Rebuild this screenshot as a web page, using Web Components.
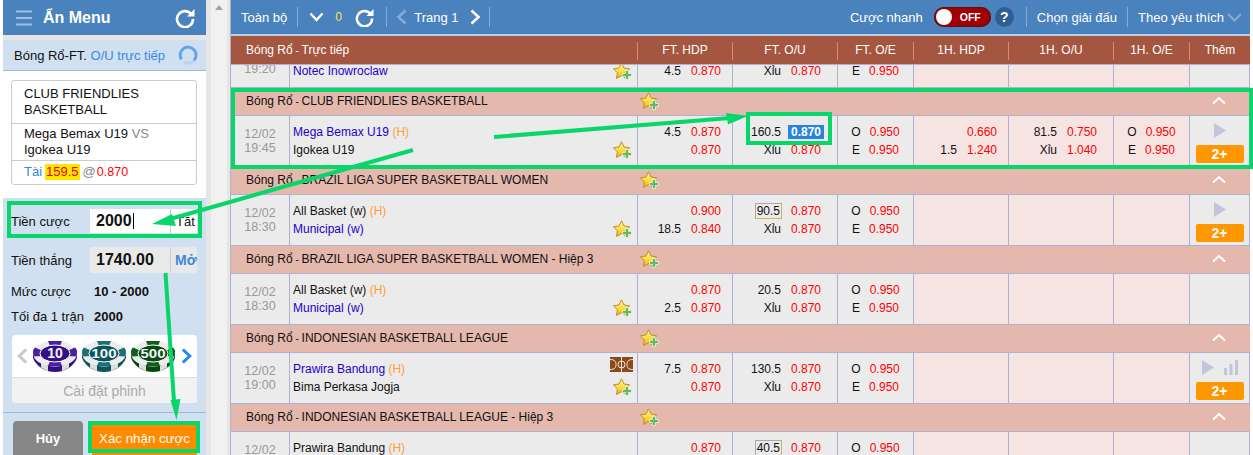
<!DOCTYPE html>
<html lang="vi"><head><meta charset="utf-8"><title>Bet</title>
<style>
html,body{margin:0;padding:0;background:#fff;overflow:hidden}
body{width:1253px;height:455px;position:relative;font:12px "Liberation Sans",Arial,sans-serif;color:#111}
.page{display:flex;height:455px;padding-left:3px;box-sizing:border-box}
</style></head><body>
<div class="page">
<bet-slip></bet-slip>
<side-gutter></side-gutter>
<bet-board>
<bet-match clip time="19:20" away="Notec Inowroclaw" fav="away" ft-hdp="~|4.5 0.870" ft-ou="~|Xỉu 0.870" ft-oe="~|E 0.950"></bet-match>
<bet-league name="CLUB FRIENDLIES BASKETBALL"></bet-league>
<bet-match date="12/02" time="19:45" home="Mega Bemax U19" away="Igokea U19" fav="home" ft-hdp="4.5 0.870|_ 0.870" ft-ou="160.5 *0.870|Xỉu 0.870" ft-oe="O 0.950|E 0.950" h-hdp="_ 0.660|1.5 1.240" h-ou="81.5 0.750|Xỉu 1.040" h-oe="O 0.950|E 0.950" more></bet-match>
<bet-league name="BRAZIL LIGA SUPER BASKETBALL WOMEN"></bet-league>
<bet-match date="12/02" time="18:30" home="All Basket (w)" away="Municipal (w)" fav="away" ft-hdp="_ 0.900|18.5 0.840" ft-ou="[90.5] 0.870|Xỉu 0.870" ft-oe="O 0.950|E 0.950" more></bet-match>
<bet-league name="BRAZIL LIGA SUPER BASKETBALL WOMEN - Hiệp 3"></bet-league>
<bet-match date="12/02" time="18:30" home="All Basket (w)" away="Municipal (w)" fav="away" ft-hdp="_ 0.870|2.5 0.870" ft-ou="20.5 0.870|Xỉu 0.870" ft-oe="O 0.950|E 0.950"></bet-match>
<bet-league name="INDONESIAN BASKETBALL LEAGUE"></bet-league>
<bet-match date="12/02" time="19:00" home="Prawira Bandung" away="Bima Perkasa Jogja" fav="home" court stats ft-hdp="7.5 0.870|_ 0.870" ft-ou="130.5 0.870|Xỉu 0.870" ft-oe="O 0.950|E 0.950" more></bet-match>
<bet-league name="INDONESIAN BASKETBALL LEAGUE - Hiệp 3"></bet-league>
<bet-match date="12/02" time="19:00" home="Prawira Bandung" away="Bima Perkasa Jogja" ft-hdp="_ 0.870|_ 0.870" ft-ou="[40.5] 0.870|Xỉu 0.870" ft-oe="O 0.950|E 0.950"></bet-match>
</bet-board>
</div>
<note-overlay></note-overlay>
<script>
const STAR=`<svg width="20" height="19" viewBox="0 0 20 19" style="display:block"><defs><linearGradient id="sg" x1="0" y1="0" x2="0" y2="1"><stop offset="0" stop-color="#fff6a8"/><stop offset=".55" stop-color="#ffdc3c"/><stop offset="1" stop-color="#eeb011"/></linearGradient></defs><path d="M8.500 .8 11 6l5.600.8-4 4 .9 5.600-5-2.700-5 2.700.9-5.600-4-4L6 6z" fill="url(#sg)" stroke="#b98f2a" stroke-width="1" stroke-linejoin="round"/><path d="M12.500 8.500h3v3h3v3h-3v3h-3v-3h-3v-3h3z" fill="#67b85f" stroke="#e8f5e0" stroke-width=".8"/></svg>`;
const FONT=`font-family:"Liberation Sans",Arial,sans-serif;`;
class Base extends HTMLElement{
  constructor(){super();this.attachShadow({mode:'open'});}
  connectedCallback(){this.shadowRoot.innerHTML=this.render();}
}
customElements.define('side-gutter',class extends Base{render(){return `<style>
:host{display:block;flex:none;width:24px;height:455px;box-sizing:border-box;background:#f1f1f1;border-left:5px solid #e6e6e6;border-right:3px solid #e6e6e6}
i{display:block;width:0;height:0;margin:5px auto 0;border:4px solid transparent;border-top:0;border-bottom:5px solid #a3a3a3}
</style><i></i>`;}});

customElements.define('bet-chip',class extends Base{render(){
 const c=this.getAttribute('color'),d=this.getAttribute('dark'),v=this.getAttribute('value');
 const wide=v.length>2;
 return `<style>:host{display:block;width:44px;height:32px}svg{display:block}text{${FONT}}</style>
 <svg width="44" height="32" viewBox="0 0 44 32"><path d="M0 13v5c3 8 12 14 22 14s19-6 22-14v-5z" fill="${d}"/>
 <path d="M8 22l7 4v5.500l-7-4zM29 26l7-4v5.500l-7 4z" fill="#ddd"/>
 <ellipse cx="22" cy="13.500" rx="22" ry="13" fill="#ececec"/>
 <path d="M15 .9h14l-2 5h-10zM0 11.500C0 10 1 8.500 2 7.500L10 11 9 16 .5 16.500C.2 15 0 13 0 11.500zM44 11.500C44 10 43 8.500 42 7.500L34 11 35 16l8.500.5c.3-1.500.5-3.500.5-5zM15 26.100h14l-2-5h-10z" fill="${c}"/>
 <ellipse cx="22" cy="13.500" rx="15" ry="8.500" fill="${d}" stroke="#fff" stroke-width="1"/>
 <text x="22" y="18" text-anchor="middle" font-size="${wide?12:14}" font-weight="bold" fill="#f2f6f4" ${wide?'textLength="25" lengthAdjust="spacingAndGlyphs"':''}>${v}</text></svg>`;}});

customElements.define('bet-slip',class extends Base{render(){return `<style>
:host{display:flex;flex-direction:column;flex:none;width:203px;height:455px;background:#fff;font:13px "Liberation Sans",Arial,sans-serif;color:#111;overflow:hidden}
.top{height:35px;flex:none;background:#4a82bd;display:flex;align-items:center;color:#fff;font-weight:bold;font-size:16px;padding:0 11px 0 13px;box-sizing:border-box}
.top span{margin-left:11px;flex:1}
.gap{height:5px;background:#e6e6e6;flex:none}
.band{height:31px;flex:none;box-sizing:border-box;background:#d0e0f0;border-bottom:1px solid #9db8d8;display:flex;align-items:center;padding:0 8px 0 11px;white-space:pre}
.band b{font-weight:normal;color:#3a87e4}.band svg{margin-left:auto}
.card{margin:9px 8px 13px;border:1px solid #ccc;border-radius:3px;width:186px;box-sizing:border-box;height:105px;flex:none;line-height:16px}
.card div{padding:0 12px;border-bottom:1px solid #ccc;box-sizing:border-box}
.card div:last-child{border:0}
.c1{height:43px;padding-top:5px!important}.c2{height:37px;padding-top:2px!important}.c3{height:22px;display:flex;align-items:center;font-size:13px;white-space:pre}
.vs{color:#888}.t{color:#3a87e4}.y{background:#ffe600;color:#e60000;padding:0 1px;margin:0 0 0 3px}.at{color:#888;margin:0 1px 0 3px}.r{color:#f00;font-size:12.500px}
.panel{flex:1;background:#d0e0f0;padding-top:11px;display:flex;flex-direction:column}
.row{display:flex;align-items:center;padding-left:8px}
.row label{width:79px;flex:none}
.field{width:107px;display:flex;align-items:center;font-weight:bold;font-size:16px;padding-left:6px;box-sizing:border-box}
.field em{margin-left:auto;width:27px;box-sizing:border-box;border-left:1px solid #ccc;height:100%;display:flex;align-items:center;padding-left:5px;font-style:normal;font-size:13px;overflow:hidden}
.s{height:24px;background:#fff}
.s em{font-weight:normal;color:#111}
.w{height:26px;background:#e9e9e9;border-radius:3px}.w em{color:#3a87e4;font-weight:bold;font-size:14px;padding-left:4px}
.caret{display:inline-block;width:1px;height:16px;background:#000;margin-left:1px}
.info{height:25px}.info b{padding-left:4px;font-size:13px}
.chips{margin:6px 0 0 9px;width:185px;height:68px;flex:none;background:#fff;border-radius:4px;overflow:hidden;display:flex;flex-direction:column}
.rail{height:42px;flex:none;display:flex;align-items:center;padding:0 4px;gap:5px;box-sizing:border-box}
.rail svg{flex:none}
.set{flex:1;background:#f2f2f2;border-top:1px solid #ddd;color:#aaa;font-size:14px;display:flex;align-items:center;justify-content:center}
.foot{margin-top:9px;border-top:1px solid #9db8d8;padding:8px 0 0 10px;display:flex;gap:9px;flex:1}
.btn{height:40px;border-radius:4px;color:#fff;display:flex;align-items:flex-start;justify-content:center;padding-top:10px;box-sizing:border-box;font-weight:bold;font-size:13px}
.h{width:70px;background:#878787}.o{width:105px;background:#ff8a00;font-weight:normal;font-size:13.300px;border-radius:0}
</style>
<div class="top"><svg width="16" height="16" viewBox="0 0 16 16"><path d="M0 1.500h16M0 8h16M0 14.500h16" stroke="#9fc0e2" stroke-width="2"/></svg><span>Ẩn Menu</span>
<svg width="20" height="20" viewBox="0 0 20 20" fill="none"><path d="M16.500 6.500A8 8 0 1 0 18 11" stroke="#fff" stroke-width="2.600"/><path d="M19.500 1v7.500H12z" fill="#fff"/></svg></div>
<div class="gap"></div>
<div class="band">Bóng Rổ-FT. <b>O/U trực tiếp</b><svg width="20" height="20" viewBox="0 0 20 20" fill="none"><path d="M3.400 14.500A8 8 0 1 1 16 15.500" stroke="#5fa5ea" stroke-width="3"/><path d="M16 15.500A8 8 0 0 1 6 17" stroke="#b7d4f0" stroke-width="3"/></svg></div>
<div class="card"><div class="c1">CLUB FRIENDLIES<br>BASKETBALL</div><div class="c2">Mega Bemax U19 <span class="vs">VS</span><br>Igokea U19</div><div class="c3"><span class="t">Tài</span><span class="y">159.5</span><span class="at">@</span><span class="r">0.870</span></div></div>
<div class="panel">
<div class="row"><label>Tiền cược</label><div class="field s">2000<i class="caret"></i><em>Tắt</em></div></div>
<div class="row" style="margin-top:14px"><label>Tiền thắng</label><div class="field w">1740.00<em>Mở</em></div></div>
<div class="row info" style="margin-top:6px"><label>Mức cược</label><b>10 - 2000</b></div>
<div class="row info"><label>Tối đa 1 trận</label><b>2000</b></div>
<div class="chips"><div class="rail">
<svg width="12" height="18" viewBox="0 0 13 18" fill="none"><path d="M11 2 3.500 9 11 16" stroke="#c8c8c8" stroke-width="3.200"/></svg>
<bet-chip value="10" color="#4b1fa0" dark="#351082"></bet-chip><bet-chip value="100" color="#1b6f78" dark="#0e545c"></bet-chip><bet-chip value="500" color="#0e5f1a" dark="#0a4812"></bet-chip>
<svg width="12" height="18" viewBox="0 0 13 18" fill="none" style="margin-left:1px"><path d="M2 2 9.500 9 2 16" stroke="#1e88f0" stroke-width="3.200"/></svg>
</div><div class="set">Cài đặt phỉnh</div></div>
<div class="foot"><div class="btn h">Hủy</div><div class="btn o">Xác nhận cược</div></div>
</div>`;}});

customElements.define('bet-toolbar',class extends Base{render(){return `<style>
:host{display:flex;align-items:center;height:36px;box-sizing:border-box;background:#4a82bd;border-bottom:2px solid;border-image:linear-gradient(#3a6ca4 50%,#b8cde6 50%) 1;color:#fff;font:13px "Liberation Sans",Arial,sans-serif;padding-left:10px;white-space:nowrap}
.sep{width:1px;height:20px;background:#86abd4;flex:none}
svg{display:block;flex:none}
.ri{margin-left:auto;display:flex;align-items:center;padding-right:8px}
.sw{width:57px;height:20px;border-radius:10px;background:#a00000;box-shadow:inset 0 0 0 1px #5a1010;margin-left:11px;display:flex;align-items:center;padding-left:2px;box-sizing:border-box;font-weight:bold;font-size:10.500px}
.sw i{width:16px;height:16px;border-radius:50%;background:#fff;margin-right:8px}
.q{width:19px;height:20px;border-radius:50%;background:#2f5f92;margin:0 12px 0 4px;display:flex;align-items:center;justify-content:center;font-weight:bold;font-size:14px}
</style>
<span>Toàn bộ</span><i class="sep" style="margin:0 11px 0 10px"></i>
<svg width="15" height="10" viewBox="0 0 15 10" fill="none" style="margin-right:11px"><path d="M1.500 1.500 7.500 8l6-6.500" stroke="#fff" stroke-width="2.400"/></svg>
<span style="color:#f5e642;width:20px;font-size:12px;">0</span>
<svg width="19" height="19" viewBox="0 0 20 20" fill="none" style="margin-right:12px"><path d="M16.500 6.500A8 8 0 1 0 18 11" stroke="#fff" stroke-width="2.600"/><path d="M19.500 1v7.500H12z" fill="#fff"/></svg>
<i class="sep"></i>
<svg width="11" height="16" viewBox="0 0 11 16" fill="none" style="margin:0 7px 0 9px"><path d="M9.500 1.500 2.500 8l7 6.500" stroke="#86abd4" stroke-width="2.600"/></svg>
<span style="width:56px">Trang 1</span>
<svg width="11" height="16" viewBox="0 0 11 16" fill="none" style="margin-right:8px"><path d="M1.500 1.500 8.500 8l-7 6.500" stroke="#fff" stroke-width="2.600"/></svg>
<i class="sep"></i>
<div class="ri"><span>Cược nhanh</span><div class="sw"><i></i>OFF</div><div class="q">?</div><i class="sep"></i><span style="margin:0 10px">Chọn giải đấu</span><i class="sep"></i><span style="margin:0 3px 0 10px">Theo yêu thích</span>
<svg width="15" height="9" viewBox="0 0 15 9" fill="none"><path d="M1 1 7.500 7.500 14 1" stroke="#86abd4" stroke-width="2"/></svg></div>`;}});

const COLS='59px 348px 95px 105px 76px 95px 105px 76px 60px';
customElements.define('bet-board',class extends Base{render(){
 const t=['FT. HDP','FT. O/U','FT. O/E','1H. HDP','1H. O/U','1H. O/E','Thêm'];
 return `<style>
:host{display:block;flex:none;width:1020px;height:455px;overflow:hidden;border-left:1px solid #b0b0d0;box-sizing:border-box;--cols:${COLS};--line:#b0b0d2;font:12px "Liberation Sans",Arial,sans-serif}
.head{display:grid;grid-template-columns:407px 95px 105px 76px 95px 105px 76px 60px;height:29px;box-sizing:border-box;background:#a55640;border-bottom:1px solid var(--line);color:#fff;align-items:start;padding-top:6px}
.head div{height:18px;line-height:17px;text-align:center;border-right:1px solid #e08a6a;box-sizing:border-box}
.head div:first-child{text-align:left;padding-left:15px}.head div:last-child{border:0}
.d{font-size:10px}
</style><bet-toolbar></bet-toolbar><div class="head"><div>Bóng Rổ<span class="d"> - </span>Trực tiếp</div>${t.map(x=>`<div>${x}</div>`).join('')}</div><slot></slot>`;}});

customElements.define('bet-league',class extends Base{render(){return `<style>
:host{display:grid;grid-template-columns:407px 1fr 24px;height:28px;box-sizing:border-box;background:#e4b8ac;border-bottom:1px solid var(--line);align-items:center;color:#111;padding-right:14px;width:1019px}
.n{padding-left:15px;white-space:pre;margin-bottom:2px}.d{font-size:10px}
.s{padding-left:2px}
svg{display:block}
.up{margin-bottom:2px}
</style><div class="n">Bóng Rổ<span class="d"> - </span>${this.getAttribute('name')}</div><div class="s">${STAR}</div>
<svg class="up" width="14" height="9" viewBox="0 0 14 9" fill="none"><path d="M1 7.500 7 2l6 5.500" stroke="#fff" stroke-width="2"/></svg>`;}});

function oddsCell(spec){
 return (spec||'').split('|').filter(Boolean).map(l=>{
  if(l==='~')return '<p></p>';
  let [a,b]=l.split(' ');
  if(a==='_')a='';
  const boxed=a.startsWith('[');if(boxed)a=a.slice(1,-1);
  const hi=b.startsWith('*');if(hi)b=b.slice(1);
  return `<p><span class="a${boxed?' box':''}">${a}</span><span class="o${hi?' hi':''}">${b}</span></p>`;
 }).join('');
}
customElements.define('bet-match',class extends Base{render(){
 const A=n=>this.getAttribute(n),H=n=>this.hasAttribute(n);
 const fav=A('fav');
 const home=A('home'),away=A('away');
 const teams=[
  home?`<div class="tm${fav==='home'?' fav':''}">${home} <span class="h">(H)</span></div>`:'<div class="tm"></div>',
  `<div class="tm${fav==='away'?' fav':''}">${away}</div>`].join('');
 const play=`<svg width="12" height="15" viewBox="0 0 12 15"><path d="M0 0l12 7.500L0 15z" fill="#c4c4de"/></svg>`;
 const bars=`<svg width="14" height="15" viewBox="0 0 14 15" fill="#c4c4de" style="margin-left:10px"><rect x="0" y="8" width="3" height="7"/><rect x="5.500" y="4" width="3" height="11"/><rect x="11" y="0" width="3" height="15"/></svg>`;
 const court=`<svg class="court" width="23" height="15" viewBox="0 0 23 15"><rect width="23" height="15" fill="#8a4a1c"/><g fill="none" stroke="#f4e8d8" stroke-width="1"><path d="M11.500 0v15"/><circle cx="11.500" cy="7.500" r="3.500"/><path d="M0 2.500c5 0 6 2 6 5s-1 5-6 5M23 2.500c-5 0-6 2-6 5s1 5 6 5"/></g></svg>`;
 return `<style>
:host{display:block;width:1019px;height:${H('clip')?23:51}px;overflow:hidden;box-sizing:border-box;border-bottom:1px solid var(--line)}
.r{display:grid;grid-template-columns:var(--cols);height:50px;${H('clip')?'margin-top:-28px;':''}}
.c{border-right:1px solid var(--line);box-sizing:border-box;background:#ebebeb;height:50px}
.pk{background:#f5e4e1}
.tm0{text-align:center;color:#999;line-height:14px;padding-top:11px;font-size:12.500px}
.nm{display:flex;padding:7px 4px 0 3px;justify-content:space-between}
.tm{height:18px;line-height:18px;color:#111;white-space:pre}.fav{color:#2200cc}.h{color:#ff9d3c}
.ic{display:flex;flex-direction:column;align-items:flex-end;height:43px;justify-content:flex-end}
.court{display:block;margin:-3px 0 auto}
.st{margin-bottom:6px}
.od{padding-top:7px}
p{margin:0;height:18px;line-height:18px;display:flex;justify-content:flex-end;white-space:pre}
.o{color:#f00;width:30px;text-align:right}.a{color:#111;margin-right:10px;text-align:right}
.hdp{padding-right:11px}.ou{padding-right:16px}
.oe p{justify-content:center}.oe .a{margin-right:9px}
.hi{background:#2a82e0;color:#fff;font-weight:bold;padding:0 3px;margin:2px -3px 2px -3px;line-height:14px;height:14px;width:30px;box-sizing:content-box}
.box{border:1px solid #aaa;border-right-color:#d4b060;border-bottom-color:#d4b060;line-height:14px;height:14px;margin:1px 9px 0 0;padding:0 1px;align-self:flex-start}
.mo{display:flex;flex-direction:column;align-items:center;padding-top:7px}
.pl{display:flex;align-items:center;height:15px}
.two{margin-top:7px;width:48px;height:18px;background:#ff9800;border-radius:2px;color:#fff;font-weight:bold;font-size:14px;line-height:18px;text-align:center}
</style><div class="r">
<div class="c tm0">${A('date')||''}<br>${A('time')}</div>
<div class="c nm"><div>${teams}</div><div class="ic">${H('court')?court:''}<div class="st">${STAR}</div></div></div>
<div class="c od hdp">${oddsCell(A('ft-hdp'))}</div>
<div class="c od ou">${oddsCell(A('ft-ou'))}</div>
<div class="c od oe">${oddsCell(A('ft-oe'))}</div>
<div class="c pk od hdp">${oddsCell(A('h-hdp'))}</div>
<div class="c pk od ou">${oddsCell(A('h-ou'))}</div>
<div class="c pk od oe">${oddsCell(A('h-oe'))}</div>
<div class="c mo">${H('more')?`<div class="pl">${play}${H('stats')?bars:''}</div><div class="two">2+</div>`:''}</div>
</div>`;}});

customElements.define('note-overlay',class extends Base{render(){return `<style>
:host{position:absolute;left:0;top:0;width:1253px;height:455px;pointer-events:none}svg{display:block}
</style><svg width="1253" height="455" fill="none" stroke="#08d66a" stroke-width="4">
<rect x="233" y="90" width="1018" height="77"/>
<rect x="748" y="114" width="82" height="29"/>
<rect x="9" y="203" width="191" height="33"/>
<rect x="90" y="423" width="108" height="28"/>
<path d="M413 150 170 219M494 137 730 118M165.500 273 174 402"/>
<g fill="#08d66a" stroke="none"><path d="M152 224 172 214 176 226zM748 116 726 113 728 124.500zM176.500 420 170.500 400 180.500 399z"/></g>
</svg>`;}});
</script>
</body></html>
